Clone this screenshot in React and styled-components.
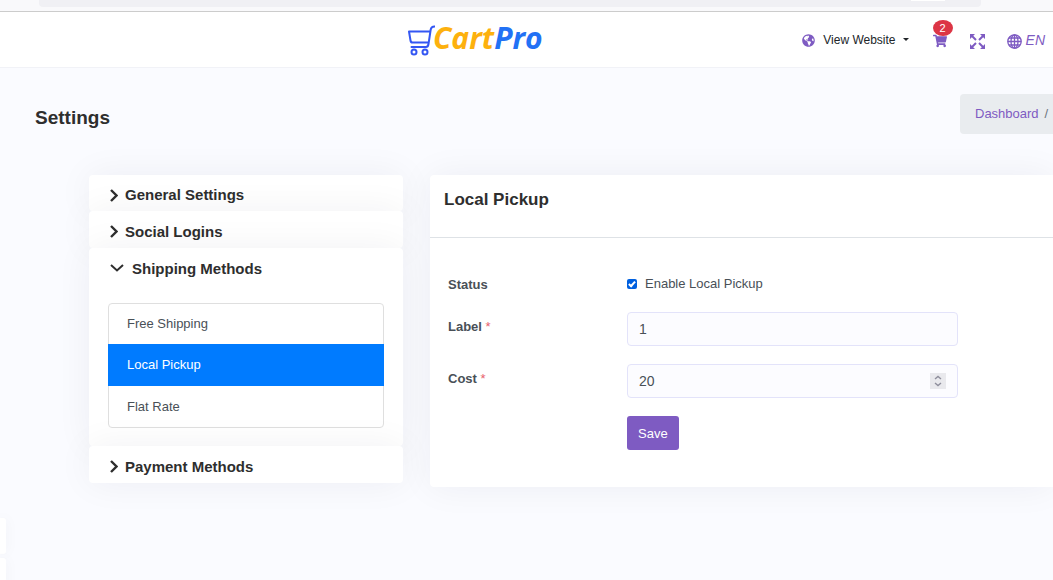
import React from "react";
import styled, { createGlobalStyle, css } from "styled-components";
import { FaGlobeAmericas, FaShoppingCart } from "react-icons/fa";

const purple = "#7e5bc2";

const GlobalStyle = createGlobalStyle`
  *, *::before, *::after { box-sizing: border-box; }
  body {
    margin: 0;
    min-height: 100vh;
    overflow: hidden;
    background: #fafbff;
    color: #495057;
    font: 13px/20px "Liberation Sans", Arial, sans-serif;
  }
  h1, h2, ul { margin: 0; padding: 0; }
  ul { list-style: none; }
  a { color: inherit; text-decoration: none; }
  button, input { font: inherit; color: inherit; }
`;

const Page = styled.div`
  position: relative;
  min-height: 100vh;
  overflow: hidden;
`;

const BrowserEdge = styled.div`
  height: 12px;
  padding: 0 72px 0 39px;
  background: #f9f9fb;
  border-bottom: 1px solid #cccccc;
`;

const AddressBar = styled.div`
  display: flex;
  justify-content: flex-end;
  height: 7px;
  padding-right: 36px;
  border-radius: 0 0 4px 4px;
  background: #f0f0f4;
`;

const AddressChip = styled.span`
  width: 34px;
  height: 1px;
  background: #ffffff;
`;

const Header = styled.header`
  display: grid;
  grid-template-columns: 1fr auto;
  align-items: center;
  height: 56px;
  padding: 0 8px 0 407px;
  background: #ffffff;
  border-bottom: 1px solid #f1f2f7;
`;

const Logo = styled.a`
  display: flex;
  align-items: center;
  justify-self: start;
  font: italic 700 30px/34px "Open Sans", "Noto Sans", sans-serif;
  color: #fdb10e;
`;

const LogoText = styled.span`
  margin: -4px 0 0 -2px;
`;

const LogoAccent = styled.span`
  color: #2271f5;
`;

const Tools = styled.nav`
  display: flex;
  align-items: center;
`;

const ViewWebsite = styled.button`
  display: flex;
  align-items: center;
  padding: 0;
  border: 0;
  background: none;
  color: #212529;
  font-size: 12px;
  svg:first-child { margin: 2px 8px 0 0; color: ${purple}; }
  svg:last-child { margin-left: 7px; }
`;

const IconButton = styled.button`
  position: relative;
  display: flex;
  margin-left: ${(p) => p.$gap}px;
  padding: 3px 0 0;
  border: 0;
  background: none;
  color: ${purple};
`;

const Badge = styled.span`
  position: absolute;
  top: -11px;
  right: -6px;
  width: 20px;
  height: 16px;
  border-radius: 50%;
  background: #dc3545;
  color: #ffffff;
  font-size: 11px;
  line-height: 16px;
  text-align: center;
`;

const Language = styled.button`
  display: flex;
  align-items: center;
  gap: 4px;
  margin-left: 22px;
  padding: 0;
  border: 0;
  background: none;
  color: ${purple};
  font-size: 14px;
  font-style: italic;
  svg { margin-top: 3px; }
`;

const TitleRow = styled.div`
  display: flex;
  justify-content: space-between;
  align-items: center;
  padding: 26px 0 0 35px;
`;

const PageTitle = styled.h1`
  padding-top: 8px;
  color: #2e2e2e;
  font-size: 19px;
  line-height: 24px;
`;

const Breadcrumb = styled.nav`
  display: flex;
  gap: 6px;
  width: 93px;
  height: 40px;
  padding: 10px 0 10px 15px;
  border-radius: 4px 0 0 4px;
  background: #e9ecef;
  color: #6c757d;
  a { color: ${purple}; }
`;

const Content = styled.main`
  display: grid;
  grid-template-columns: 314px 1fr;
  gap: 27px;
  align-items: start;
  padding: 41px 0 0 89px;
`;

const cardShadow = css`
  border-radius: 4px;
  background: #ffffff;
  box-shadow: 0 0 36px rgba(31, 30, 47, 0.06);
`;

const Accordion = styled.div`
  display: flex;
  flex-direction: column;
`;

const Section = styled.section`
  ${cardShadow}
  position: relative;
`;

const SectionToggle = styled.button`
  display: flex;
  align-items: center;
  gap: ${(p) => (p.$open ? 8 : 7)}px;
  width: 100%;
  height: ${(p) => p.$height}px;
  padding: 4px 21px 0;
  border: 0;
  background: none;
  color: #2e2e2e;
  font-size: 15px;
  font-weight: bold;
`;

const MethodList = styled.ul`
  margin: 18px 19px;
  border: 1px solid #dfdfdf;
  border-radius: 4px;
  li:last-child { padding-top: 1px; }
`;

const MethodLink = styled.a`
  display: block;
  padding: 10px 18px;
  ${(p) => p.$active && css`
    margin: 0 -1px;
    padding: 11px 19px;
    background: #007bff;
    color: #ffffff;
  `}
`;

const Panel = styled.section`
  ${cardShadow}
  border-radius: 4px 0 0 4px;
`;

const PanelTitle = styled.h2`
  height: 63px;
  padding: 15px 14px;
  border-bottom: 1px solid #dee2e6;
  color: #2e2e2e;
  font-size: 17px;
  line-height: 20px;
`;

const Form = styled.form`
  display: grid;
  gap: 18px;
  padding: 36px 95px 37px 18px;
`;

const Field = styled.div`
  display: grid;
  grid-template-columns: 179px 1fr;
  align-items: start;
`;

const FieldLabel = styled.label`
  padding-top: ${(p) => p.$top}px;
  font-weight: bold;
  line-height: 18px;
  color: #495057;
`;

const Required = styled.span`
  color: #e8606c;
  font-weight: normal;
`;

const CheckLabel = styled.label`
  display: flex;
  align-items: center;
  gap: 8px;
`;

const Checkbox = styled.input`
  appearance: none;
  display: grid;
  place-items: center;
  width: 10px;
  height: 10px;
  margin: 0;
  border-radius: 2px;
  background: #0060df;
  &:checked::after {
    content: "";
    width: 4px;
    height: 7px;
    margin-top: -2px;
    border: solid #ffffff;
    border-width: 0 2px 2px 0;
    transform: rotate(42deg);
  }
`;

const InputWrap = styled.div`
  display: flex;
  align-items: center;
  height: 34px;
  padding: 0 11px;
  border: 1px solid #e3e3fa;
  border-radius: 4px;
  background: #fcfcff;
`;

const Input = styled.input`
  flex: 1;
  min-width: 0;
  padding: 0;
  border: 0;
  outline: 0;
  background: none;
  font-size: 14px;
  appearance: textfield;
  &::-webkit-inner-spin-button { display: none; }
`;

const Stepper = styled.button`
  display: flex;
  width: 16px;
  height: 16px;
  padding: 0;
  border: 0;
  background: #e9e9ed;
  color: #8f8f9d;
`;

const Save = styled.button`
  justify-self: start;
  height: 34px;
  margin-left: 179px;
  padding: 1px 11px 0;
  border: 0;
  border-radius: 3px;
  background: ${purple};
  color: #ffffff;
`;

const SideTabs = styled.div`
  position: absolute;
  top: 518px;
  left: 0;
  display: grid;
  gap: 4px;
  span {
    width: 6px;
    height: 36px;
    border-radius: 0 3px 3px 0;
    background: #ffffff;
    box-shadow: 0 0 14px rgba(31, 30, 47, 0.05);
  }
`;

const CartLogo = () => (
  <svg width="28" height="32" viewBox="0 0 28 32" fill="none" stroke="#3457f3" strokeWidth="2" strokeLinecap="round" strokeLinejoin="round" aria-hidden="true">
    <path d="M27.500 2.500c-2.500 0-3.400.8-3.800 3L21.500 20c-.3 2-1 3-2.500 3H4.500M23 7.500H2l1.500 9c.2 1.400.8 2 2 2H21.500" />
    <circle cx="7" cy="28" r="2.500" />
    <circle cx="18" cy="28" r="2.500" />
  </svg>
);

const Expand = () => (
  <svg width="15" height="15" viewBox="0 0 15 15" fill="none" stroke="currentColor" strokeWidth="2" aria-hidden="true">
    <path d="M2 2l4 4M13 2L9 6M2 13l4-4M13 13L9 9" />
    <path fill="currentColor" stroke="none" d="M0 0h5L0 5zM15 0v5L10 0zM0 15v-5l5 5zM15 15h-5l5-5z" />
  </svg>
);

const Globe = () => (
  <svg width="15" height="15" viewBox="0 0 15 15" fill="none" stroke="currentColor" strokeWidth="1.300" aria-hidden="true">
    <circle cx="7.500" cy="7.500" r="6.700" />
    <ellipse cx="7.500" cy="7.500" rx="3.500" ry="6.700" />
    <path d="M7.500.7v13.600M.7 7.500h13.600M1.700 4h11.600M1.700 11h11.600" />
  </svg>
);

const Chevron = ({ open }) =>
  open ? (
    <svg width="14" height="13" viewBox="0 0 14 13" fill="none" stroke="currentColor" strokeWidth="2" aria-hidden="true">
      <path d="M1 3l6 5.500L13 3" />
    </svg>
  ) : (
    <svg width="8" height="13" viewBox="0 0 8 13" fill="none" stroke="currentColor" strokeWidth="2.400" aria-hidden="true">
      <path d="M1 1l5.500 5.500L1 12" />
    </svg>
  );

const methods = ["Free Shipping", "Local Pickup", "Flat Rate"];

const sections = [
  { title: "General Settings", height: 36 },
  { title: "Social Logins", height: 37 },
  { title: "Shipping Methods", height: 37, items: methods },
  { title: "Payment Methods", height: 37 },
];

export default function App() {
  return (
    <>
      <GlobalStyle />
      <Page>
        <BrowserEdge>
          <AddressBar>
            <AddressChip />
          </AddressBar>
        </BrowserEdge>
        <Header>
          <Logo href="#">
            <CartLogo />
            <LogoText>Cart<LogoAccent>Pro</LogoAccent></LogoText>
          </Logo>
          <Tools>
            <ViewWebsite type="button">
              <FaGlobeAmericas size={13} />
              View Website
              <svg width="6" height="3" viewBox="0 0 6 3" aria-hidden="true">
                <path d="M0 0h6L3 3z" fill="currentColor" />
              </svg>
            </ViewWebsite>
            <IconButton type="button" aria-label="Orders" $gap={24}>
              <FaShoppingCart size={14} />
              <Badge>2</Badge>
            </IconButton>
            <IconButton type="button" aria-label="Full screen" $gap={23}>
              <Expand />
            </IconButton>
            <Language type="button">
              <Globe />
              EN
            </Language>
          </Tools>
        </Header>
        <TitleRow>
          <PageTitle>Settings</PageTitle>
          <Breadcrumb aria-label="Breadcrumb">
            <a href="#">Dashboard</a>
            <span>/</span>
          </Breadcrumb>
        </TitleRow>
        <Content>
          <Accordion>
            {sections.map(({ title, height, items }) => (
              <Section key={title}>
                <SectionToggle type="button" $height={height} $open={!!items} aria-expanded={!!items}>
                  <Chevron open={!!items} />
                  {title}
                </SectionToggle>
                {items && (
                  <MethodList>
                    {items.map((item) => (
                      <li key={item}>
                        <MethodLink href="#" $active={item === "Local Pickup"}>{item}</MethodLink>
                      </li>
                    ))}
                  </MethodList>
                )}
              </Section>
            ))}
          </Accordion>
          <Panel>
            <PanelTitle>Local Pickup</PanelTitle>
            <Form>
              <Field>
                <FieldLabel htmlFor="enabled" $top={2}>Status</FieldLabel>
                <CheckLabel>
                  <Checkbox id="enabled" type="checkbox" defaultChecked />
                  Enable Local Pickup
                </CheckLabel>
              </Field>
              <Field>
                <FieldLabel htmlFor="label" $top={6}>Label <Required>*</Required></FieldLabel>
                <InputWrap>
                  <Input id="label" type="text" defaultValue="1" />
                </InputWrap>
              </Field>
              <Field>
                <FieldLabel htmlFor="cost" $top={6}>Cost <Required>*</Required></FieldLabel>
                <InputWrap>
                  <Input id="cost" type="number" defaultValue="20" />
                  <Stepper type="button" aria-label="Change cost">
                    <svg width="16" height="16" viewBox="0 0 16 16" fill="none" stroke="currentColor" strokeWidth="1.400" aria-hidden="true">
                      <path d="M5 6l3-2.500L11 6M5 10l3 2.500L11 10" />
                    </svg>
                  </Stepper>
                </InputWrap>
              </Field>
              <Save type="submit">Save</Save>
            </Form>
          </Panel>
        </Content>
        <SideTabs aria-hidden="true">
          <span />
          <span />
        </SideTabs>
      </Page>
    </>
  );
}
